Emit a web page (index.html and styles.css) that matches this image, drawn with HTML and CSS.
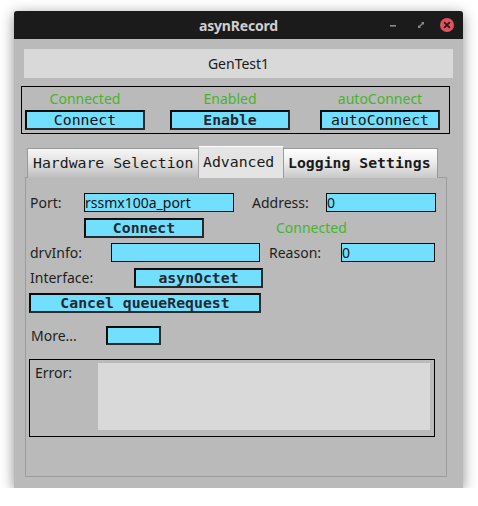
FILE: index.html
```html
<!DOCTYPE html>
<html>
<head>
<meta charset="utf-8">
<link rel="stylesheet" href="styles.css">
</head>
<body>
<div class="window">
  <div class="titlebar">
    <div></div>
    <div class="title">asynRecord</div>
    <div class="controls">
      <svg class="ctl" width="10" height="10" viewBox="0 0 10 10"><rect x="2" y="5" width="6" height="1.6" fill="#8a8a8a"/></svg>
      <svg class="ctl" width="10" height="10" viewBox="0 0 10 10"><path d="M5 2 H8 V5 Z M2 5 L5 8 H2 Z" fill="#8a8a8a"/><path d="M3 7 L7 3" stroke="#8a8a8a" stroke-width="1.4"/></svg>
      <svg class="ctl close" width="14" height="14" viewBox="0 0 14 14"><circle cx="7" cy="7" r="7" fill="#e0535e"/><path d="M4.6 4.6 L9.4 9.4 M9.4 4.6 L4.6 9.4" stroke="#2a1a1a" stroke-width="1.8" stroke-linecap="round"/></svg>
    </div>
  </div>
  <div class="content">
    <div class="device">GenTest1</div>
    <div class="frame">
      <div class="col">
        <div class="status">Connected</div>
        <div class="btn">Connect</div>
      </div>
      <div class="col col2">
        <div class="status">Enabled</div>
        <div class="btn bold">Enable</div>
      </div>
      <div class="col col3">
        <div class="status">autoConnect</div>
        <div class="btn">autoConnect</div>
      </div>
    </div>
    <div class="tabs">
      <div class="tab tab-hw">Hardware Selection</div>
      <div class="tab tab-sel">Advanced</div>
      <div class="tab tab-log">Logging Settings</div>
    </div>
    <div class="panel">
      <div class="row">
        <div class="lbl w55">Port:</div>
        <div class="input w150">rssmx100a_port</div>
        <div class="lbl addr">Address:</div>
        <div class="input w110">0</div>
      </div>
      <div class="row">
        <div class="btn bold w120 ml55">Connect</div>
        <div class="status conn2">Connected</div>
      </div>
      <div class="row">
        <div class="lbl w82">drvInfo:</div>
        <div class="input w149"></div>
        <div class="lbl reason">Reason:</div>
        <div class="input w94">0</div>
      </div>
      <div class="row">
        <div class="lbl w105">Interface:</div>
        <div class="btn bold w129">asynOctet</div>
      </div>
      <div class="row">
        <div class="btn bold w232">Cancel queueRequest</div>
      </div>
      <div class="row row-more">
        <div class="lbl w77 more">More...</div>
        <div class="btn w55"></div>
      </div>
      <div class="errframe">
        <div class="lbl errlbl">Error:</div>
        <div class="errbox"></div>
      </div>
    </div>
  </div>
</div>
</body>
</html>
```

FILE: styles.css
```css
html, body {
  margin: 0;
  padding: 0;
  background: #ffffff;
}
body {
  padding: 11px 0 0 14px;
  font-family: "Noto Sans", sans-serif;
}
.window {
  width: 449px;
  height: 477px;
  background: #bababa;
  box-shadow: 0 3px 14px rgba(0,0,0,0.45);
  border-radius: 3px 3px 0 0;
  overflow: hidden;
}
.titlebar {
  height: 28px;
  background: #1b1b1b;
  display: grid;
  grid-template-columns: 1fr auto 1fr;
  align-items: center;
}
.title {
  color: #cfcfcf;
  font-size: 14px;
  font-weight: bold;
  letter-spacing: -0.2px;
}
.controls {
  display: flex;
  justify-content: flex-end;
  align-items: center;
  padding-right: 9px;
}
.ctl { display: block; }
.ctl + .ctl { margin-left: 18px; }
.ctl.close { margin-left: 14px; }

.content {
  display: flex;
  flex-direction: column;
  align-items: flex-start;
}
.device {
  margin: 10px 0 0 10px;
  width: 429px;
  height: 29px;
  background: #d9d9d9;
  color: #1a1a1a;
  font-size: 14px;
  line-height: 29px;
  text-align: center;
}
.frame {
  margin: 8px 0 0 7px;
  width: 429px;
  height: 48px;
  box-sizing: border-box;
  border: 1px solid #000;
  display: flex;
  padding: 2px 0 0 3px;
}
.col {
  width: 120px;
  display: flex;
  flex-direction: column;
  align-items: center;
}
.col2 { margin-left: 25px; }
.col3 { margin-left: 30px; }
.status {
  color: #46b52b;
  font-size: 14px;
  line-height: 19px;
  height: 19px;
  margin-bottom: 2px;
}
.btn {
  box-sizing: border-box;
  width: 120px;
  height: 20px;
  background: #73dfff;
  border: 2px solid #151515;
  border-color: #0c0c0c #2a2a2a #2a2a2a #0c0c0c;
  font-family: "DejaVu Sans Mono", monospace;
  font-size: 14.8px;
  line-height: 16px;
  color: #111;
  text-align: center;
  white-space: nowrap;
  overflow: hidden;
}
.bold { font-weight: bold; color: #222a30; }

.tabs {
  margin: 12px 0 0 13px;
  display: flex;
  align-items: flex-end;
  height: 32px;
  position: relative;
  z-index: 1;
  margin-bottom: -1px;
}
.tab {
  box-sizing: border-box;
  height: 30px;
  border: 1px solid #9a9a9a;
  border-bottom: none;
  background: linear-gradient(#f6f6f6, #e2e2e2 45%, #bdbdbd);
  font-family: "DejaVu Sans Mono", monospace;
  font-size: 14.8px;
  line-height: 28px;
  color: #1a1a1a;
  padding: 0 0 0 5px;
}
.tab-hw { width: 172px; }
.tab-sel {
  width: 86px;
  height: 32px;
  background: #e4e4e4;
  border-color: #a4a4a4;
  border-top-color: #ffffff;
  line-height: 29px;
  padding-left: 4px;
  margin-left: -1px;
  margin-right: -1px;
}
.tab-log {
  width: 155px;
  font-weight: bold;
  background: linear-gradient(#ffffff, #ededed 45%, #c8c8c8);
  padding-left: 4px;
}

.panel {
  margin-left: 11px;
  width: 422px;
  height: 300px;
  box-sizing: border-box;
  border: 1px solid #9c9c9c;
  padding: 15px 0 0 3px;
  display: flex;
  flex-direction: column;
  align-items: flex-start;
}
.row {
  display: flex;
  align-items: center;
  height: 19px;
  margin-bottom: 6px;
}
.row-more { margin-top: 8px; margin-bottom: 14px; }
.lbl {
  font-size: 14px;
  color: #1e1e1e;
  line-height: 19px;
  white-space: nowrap;
  padding-left: 1px;
  box-sizing: border-box;
}
.input {
  box-sizing: border-box;
  height: 19px;
  background: #73dfff;
  border: 1px solid #0d0d0d;
  font-size: 14px;
  line-height: 17px;
  color: #111;
  padding-left: 0;
  white-space: nowrap;
}
.w55 { width: 55px; }
.w77 { width: 77px; }
.w82 { width: 82px; }
.w105 { width: 105px; }
.w150 { width: 150px; }
.w149 { width: 149px; }
.w110 { width: 110px; }
.w94 { width: 94px; }
.w120 { width: 120px; }
.w129 { width: 129px; }
.w232 { width: 232px; }
.btn.w55 { width: 55px; height: 19px; }
.ml55 { margin-left: 55px; }
.addr { margin-left: 17px; width: 75px; }
.reason { margin-left: 8px; width: 73px; }
.more { padding-left: 2px; }
.conn2 { margin: 0 0 0 72px; line-height: 19px; }

.errframe {
  box-sizing: border-box;
  width: 406px;
  height: 78px;
  border: 1px solid #000;
  display: flex;
  align-items: flex-start;
  padding: 3px 4px 6px 4px;
}
.errlbl { width: 64px; line-height: 20px; }
.errbox {
  flex: 1;
  height: 67px;
  background: #d9d9d9;
}
```
